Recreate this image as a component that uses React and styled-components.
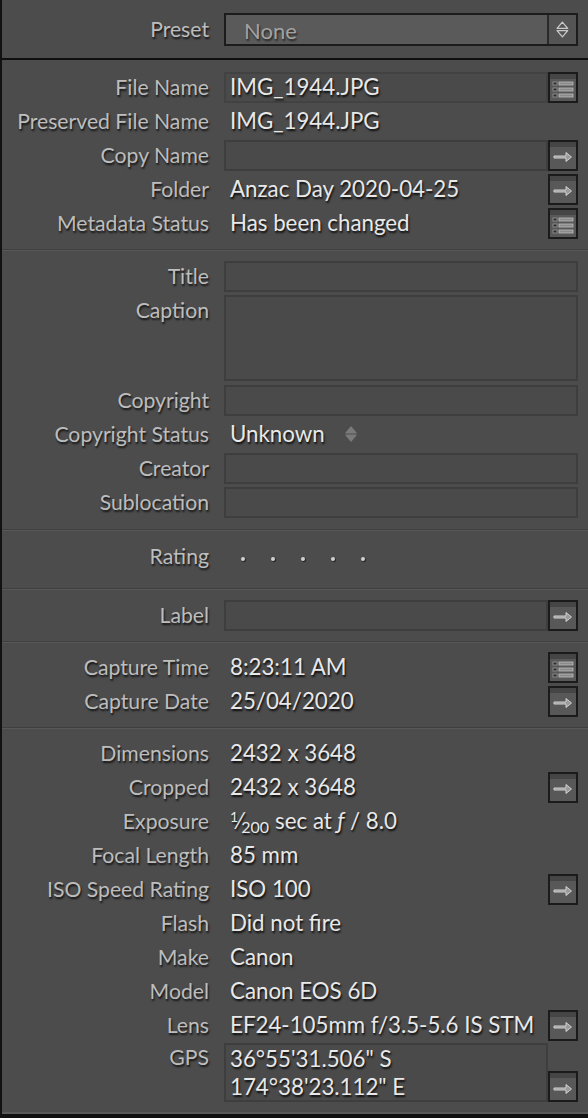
import React from 'react';
import styled, { createGlobalStyle } from 'styled-components';

const GlobalStyle = createGlobalStyle`
  html, body { margin: 0; padding: 0; background: #4c4c4c; }
  body { font-family: Lato, "Liberation Sans", sans-serif; }
`;

const Panel = styled.div`
  width: 588px;
  min-height: 1118px;
  box-sizing: border-box;
  background: #4c4c4c;
  border-left: 2px solid #121212;
  border-bottom: 4px solid #111;
  display: flex;
  flex-direction: column;
`;

const PresetBar = styled.div`
  height: 58px;
  display: grid;
  grid-template-columns: 207px 1fr;
  column-gap: 15px;
  align-items: center;
  padding-right: 10px;
  border-bottom: 2px solid #0f0f0f;
`;

const Section = styled.div`
  padding: ${p => p.$pad || '10px 0 10px'};
  border-bottom: 1px solid #3f3f3f;
  box-shadow: 0 1px 0 #585858;
  margin-bottom: 1px;
  &:last-child {
    border-bottom: none;
    box-shadow: inset 0 -2px 0 #5a5a5a;
    margin-bottom: 0;
    flex: 1;
  }
`;

const Row = styled.div`
  display: grid;
  grid-template-columns: 207px 1fr;
  column-gap: 15px;
  align-items: ${p => (p.$top ? 'start' : 'center')};
  min-height: ${p => p.$h || 34}px;
  padding-right: 10px;
`;

const Label = styled.div`
  text-align: right;
  font-size: 21.2px;
  color: #bdbdbd;
  white-space: nowrap;
  line-height: 34px;
  text-shadow: 1px 2px 2px rgba(0, 0, 0, 0.75);
`;

const Cell = styled.div`
  display: flex;
  align-items: ${p => (p.$bottom ? 'flex-end' : 'center')};
  min-width: 0;
`;

const Box = styled.div`
  flex: 1;
  box-sizing: border-box;
  height: ${p => p.$h || 31}px;
  border: 2px solid ${p => (p.$empty ? '#3e3e3e' : '#424242')};
  background: #4a4a4a;
  display: flex;
  flex-direction: column;
  justify-content: center;
  padding-left: 4px;
  min-width: 0;
`;

const Plain = styled.div`
  flex: 1;
  padding-left: 6px;
  display: flex;
  align-items: center;
  gap: 20px;
  min-width: 0;
`;

const Value = styled.div`
  font-size: 22.3px;
  color: #e8e8e8;
  white-space: nowrap;
  line-height: 28px;
  text-shadow: 1px 2px 2px rgba(0, 0, 0, 0.85);
`;

const Sup = styled.sup`
  font-size: 14px;
  vertical-align: 7px;
  line-height: 0;
`;

const Sub = styled.sub`
  font-size: 16px;
  vertical-align: -4px;
  line-height: 0;
  margin-right: 6px;
`;

const Button = styled.div`
  width: 30px;
  height: 31px;
  box-sizing: border-box;
  flex: none;
  border: 2px solid #1b1b1b;
  background: linear-gradient(#454545 0 5px, #585858 5px);
  display: flex;
  align-items: center;
  justify-content: center;
  padding-top: 4px;
  margin-left: ${p => (p.$attached ? '0' : 'auto')};
`;

const Select = styled.div`
  height: 33px;
  box-sizing: border-box;
  border: 2px solid #1c1c1c;
  background: #5a5a5a;
  display: flex;
`;

const SelectText = styled.div`
  flex: 1;
  padding-left: 18px;
  font-size: 22px;
  line-height: 31px;
  color: #a2a2a2;
  text-shadow: 1px 2px 2px rgba(0, 0, 0, 0.6);
`;

const SelectArrows = styled.div`
  width: 27px;
  border-left: 2px solid #2a2a2a;
  background: #545454;
  display: flex;
  align-items: center;
  justify-content: center;
`;

const Dots = styled.div`
  display: flex;
  gap: 26px;
  padding-left: 17px;
  padding-top: 6px;
`;

const Dot = styled.span`
  width: 4px;
  height: 4px;
  border-radius: 50%;
  background: #d0d0d0;
  box-shadow: 1px 1px 1px rgba(0, 0, 0, 0.6);
`;

const Arrow = () => (
  <svg width="20" height="12" viewBox="0 0 20 12">
    <path d="M1 5h12V1.5L18.5 6 13 10.5V7H1z" fill="#9a9a9a" stroke="#d0d0d0" strokeWidth="1" strokeLinejoin="round" />
  </svg>
);

const ListIcon = () => (
  <svg width="22" height="18" viewBox="0 0 22 18">
    {[2, 8, 14].map(y => (
      <g key={y}>
        <rect x="1" y={y} width="4" height="3" fill="#2e2e2e" stroke="#9a9a9a" strokeWidth="0.8" />
        <rect x="7" y={y} width="14" height="3" fill="#8a8a8a" stroke="#bdbdbd" strokeWidth="0.8" />
      </g>
    ))}
  </svg>
);

const UpDown = ({ fill = 'none', stroke = '#bbb', size = 16 }) => (
  <svg width={size * 0.75} height={size} viewBox="0 0 12 16">
    <path d="M6 1L11 7H1z" fill={fill} stroke={stroke} strokeWidth="1.2" strokeLinejoin="round" />
    <path d="M6 15L11 9H1z" fill={fill} stroke={stroke} strokeWidth="1.2" strokeLinejoin="round" />
  </svg>
);

const Btn = ({ kind, attached }) => (
  <Button $attached={attached}>{kind === 'list' ? <ListIcon /> : <Arrow />}</Button>
);

const Field = ({ label, value, btn, box, h, top }) => (
  <Row $h={h ? h + 4 : 34} $top={top}>
    <Label>{label}</Label>
    <Cell>
      {box ? (
        <Box $h={h} $empty={!value}>
          {value && <Value>{value}</Value>}
        </Box>
      ) : (
        <Plain>
          <Value>{value}</Value>
        </Plain>
      )}
      {btn && <Btn kind={btn} attached={box} />}
    </Cell>
  </Row>
);

export default function App() {
  return (
    <>
      <GlobalStyle />
      <Panel>
        <PresetBar>
          <Label>Preset</Label>
          <Select>
            <SelectText>None</SelectText>
            <SelectArrows>
              <UpDown stroke="#c8c8c8" size={17} />
            </SelectArrows>
          </Select>
        </PresetBar>

        <Section $pad="10px 0 9px">
          <Field label="File Name" value="IMG_1944.JPG" box btn="list" />
          <Field label="Preserved File Name" value="IMG_1944.JPG" />
          <Field label="Copy Name" box btn="arrow" />
          <Field label="Folder" value="Anzac Day 2020-04-25" btn="arrow" />
          <Field label="Metadata Status" value="Has been changed" btn="list" />
        </Section>

        <Section $pad="8px 0 10px">
          <Field label="Title" box />
          <Row $h={90} $top>
            <Label>Caption</Label>
            <Cell style={{ paddingTop: 2 }}>
              <Box $h={86} $empty />
            </Cell>
          </Row>
          <Field label="Copyright" box />
          <Row>
            <Label>Copyright Status</Label>
            <Cell>
              <Plain>
                <Value>Unknown</Value>
                <UpDown fill="#7a7a7a" stroke="#7a7a7a" size={16} />
              </Plain>
            </Cell>
          </Row>
          <Field label="Creator" box />
          <Field label="Sublocation" box />
        </Section>

        <Section $pad="8px 0 15px">
          <Row>
            <Label>Rating</Label>
            <Cell>
              <Dots>
                {[0, 1, 2, 3, 4].map(i => <Dot key={i} />)}
              </Dots>
            </Cell>
          </Row>
        </Section>

        <Section $pad="8px 0 9px">
          <Field label="Label" box btn="arrow" />
        </Section>

        <Section $pad="7px 0 9px">
          <Field label="Capture Time" value="8:23:11 AM" btn="list" />
          <Field label="Capture Date" value="25/04/2020" btn="arrow" />
        </Section>

        <Section $pad="7px 0 10px">
          <Field label="Dimensions" value="2432 x 3648" />
          <Field label="Cropped" value="2432 x 3648" btn="arrow" />
          <Row>
            <Label>Exposure</Label>
            <Cell>
              <Plain>
                <Value>
                  <Sup>1</Sup>⁄<Sub>200</Sub>sec at <i>ƒ</i> / 8.0
                </Value>
              </Plain>
            </Cell>
          </Row>
          <Field label="Focal Length" value="85 mm" />
          <Field label="ISO Speed Rating" value="ISO 100" btn="arrow" />
          <Field label="Flash" value="Did not fire" />
          <Field label="Make" value="Canon" />
          <Field label="Model" value="Canon EOS 6D" />
          <Field label="Lens" value="EF24-105mm f/3.5-5.6 IS STM" btn="arrow" />
          <Row $h={60} $top>
            <Label style={{ lineHeight: '30px' }}>GPS</Label>
            <Cell $bottom style={{ paddingTop: 1 }}>
              <Box $h={59} $empty>
                <Value>36°55'31.506" S</Value>
                <Value>174°38'23.112" E</Value>
              </Box>
              <Btn kind="arrow" attached />
            </Cell>
          </Row>
        </Section>
      </Panel>
    </>
  );
}
